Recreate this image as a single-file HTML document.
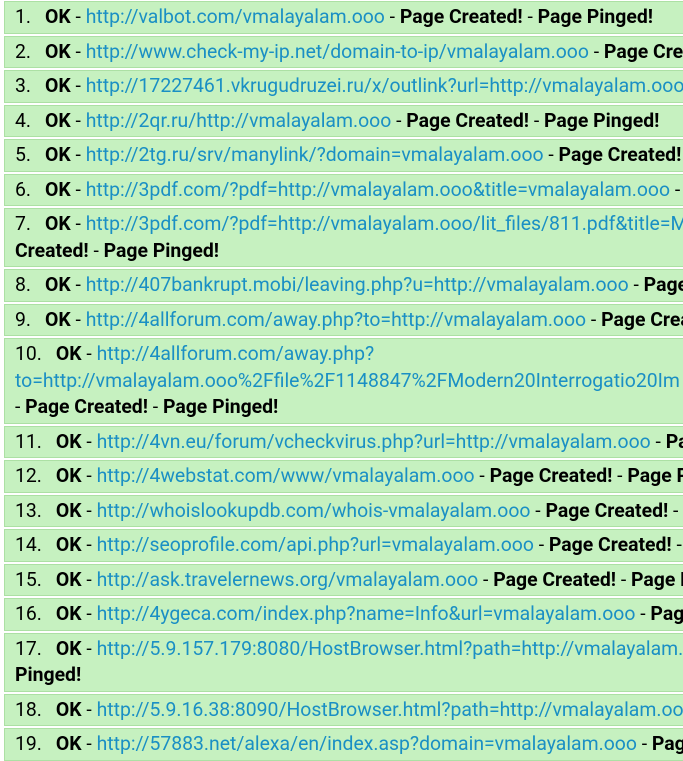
<!DOCTYPE html>
<html><head><meta charset="utf-8"><style>
html,body{margin:0;padding:0;background:#fff;overflow:hidden;width:683px;height:761px}
body{font-family:"Roboto","Liberation Sans",sans-serif;font-size:19.4px;color:#000}
.r{margin:0 0 2px 4px;width:669px;padding:2px 0 2px 10px;line-height:26.5px;background:#c6f1c0;border:1px solid #ace0a4;border-right:none;white-space:nowrap;box-sizing:content-box;overflow:hidden}
.n{display:inline-block;margin-right:14px}
b{font-weight:bold}
a{color:#1a8fc4;text-decoration:none}
</style></head><body>
<div style="height:1px"></div>
<div class="r"><span class="n">1.</span><b>OK</b> - <a>http://valbot.com/vmalayalam.ooo</a> - <b>Page Created!</b> - <b>Page Pinged!</b></div>
<div class="r"><span class="n">2.</span><b>OK</b> - <a>http://www.check-my-ip.net/domain-to-ip/vmalayalam.ooo</a> - <b>Page Created!</b> - <b>Page Pinged!</b></div>
<div class="r"><span class="n">3.</span><b>OK</b> - <a>http://17227461.vkrugudruzei.ru/x/outlink?url=http://vmalayalam.ooo</a> - <b>Page Created!</b></div>
<div class="r"><span class="n">4.</span><b>OK</b> - <a>http://2qr.ru/http://vmalayalam.ooo</a> - <b>Page Created!</b> - <b>Page Pinged!</b></div>
<div class="r"><span class="n">5.</span><b>OK</b> - <a>http://2tg.ru/srv/manylink/?domain=vmalayalam.ooo</a> - <b>Page Created!</b> - <b>Page Pinged!</b></div>
<div class="r"><span class="n">6.</span><b>OK</b> - <a>http://3pdf.com/?pdf=http://vmalayalam.ooo&amp;title=vmalayalam.ooo</a> - <b>Page Created!</b></div>
<div class="r"><span class="n">7.</span><b>OK</b> - <a>http://3pdf.com/?pdf=http://vmalayalam.ooo/lit_files/811.pdf&amp;title=Modern</a> - <b>Page</b><br><b>Created!</b> - <b>Page Pinged!</b></div>
<div class="r"><span class="n">8.</span><b>OK</b> - <a>http://407bankrupt.mobi/leaving.php?u=http://vmalayalam.ooo</a> - <b>Page Created!</b></div>
<div class="r"><span class="n">9.</span><b>OK</b> - <a>http://4allforum.com/away.php?to=http://vmalayalam.ooo</a> - <b>Page Created!</b></div>
<div class="r"><span class="n">10.</span><b>OK</b> - <a>http://4allforum.com/away.php?</a><br><a>to=http://vmalayalam.ooo%2Ffile%2F1148847%2FModern20Interrogatio20Im</a><br>- <b>Page Created!</b> - <b>Page Pinged!</b></div>
<div class="r"><span class="n">11.</span><b>OK</b> - <a>http://4vn.eu/forum/vcheckvirus.php?url=http://vmalayalam.ooo</a> - <b>Page Created!</b></div>
<div class="r"><span class="n">12.</span><b>OK</b> - <a>http://4webstat.com/www/vmalayalam.ooo</a> - <b>Page Created!</b> - <b>Page Pinged!</b></div>
<div class="r"><span class="n">13.</span><b>OK</b> - <a>http://whoislookupdb.com/whois-vmalayalam.ooo</a> - <b>Page Created!</b> - <b>Page Pinged!</b></div>
<div class="r"><span class="n">14.</span><b>OK</b> - <a>http://seoprofile.com/api.php?url=vmalayalam.ooo</a> - <b>Page Created!</b> - <b>Page Pinged!</b></div>
<div class="r"><span class="n">15.</span><b>OK</b> - <a>http://ask.travelernews.org/vmalayalam.ooo</a> - <b>Page Created!</b> - <b>Page Pinged!</b></div>
<div class="r"><span class="n">16.</span><b>OK</b> - <a>http://4ygeca.com/index.php?name=Info&amp;url=vmalayalam.ooo</a> - <b>Page Created!</b></div>
<div class="r"><span class="n">17.</span><b>OK</b> - <a>http://5.9.157.179:8080/HostBrowser.html?path=http://vmalayalam.ooo</a> - <b>Page</b><br><b>Pinged!</b></div>
<div class="r"><span class="n">18.</span><b>OK</b> - <a>http://5.9.16.38:8090/HostBrowser.html?path=http://vmalayalam.ooo</a> - <b>Page Created!</b></div>
<div class="r"><span class="n">19.</span><b>OK</b> - <a>http://57883.net/alexa/en/index.asp?domain=vmalayalam.ooo</a> - <b>Page Created!</b></div>
</body></html>
